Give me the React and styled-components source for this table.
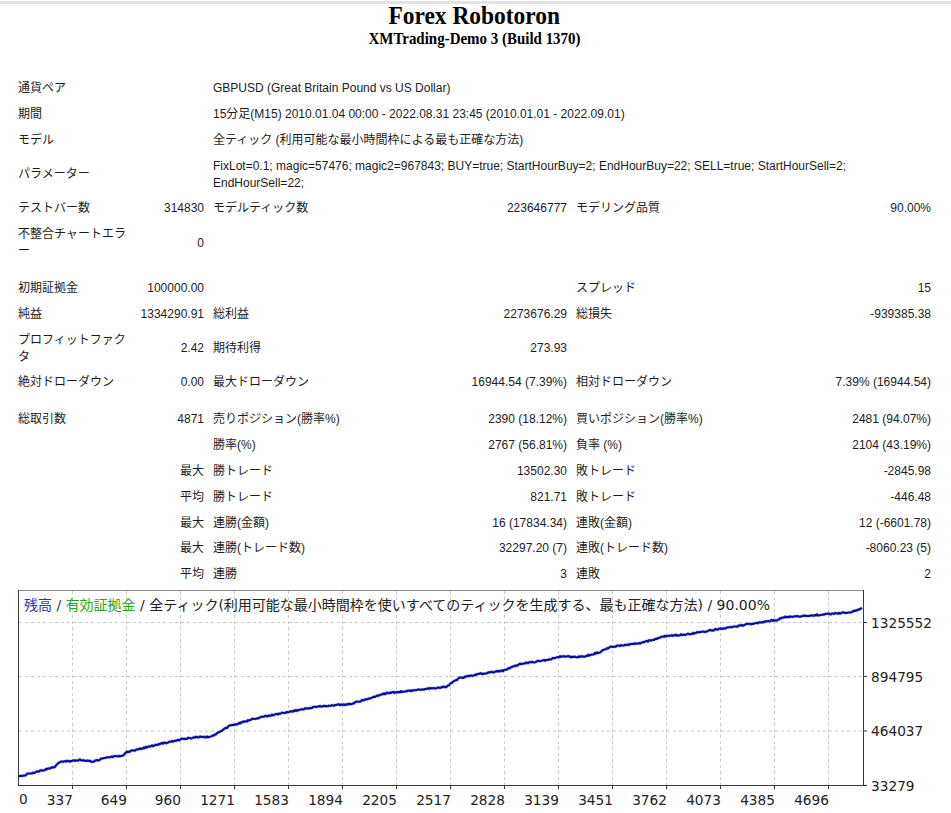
// react imports
import React from 'react';

// 3rd party imports
import styled, { createGlobalStyle } from 'styled-components';

const GlobalStyle = createGlobalStyle`
  html, body {
    margin: 0;
    padding: 0;
    background: #fff;
  }
  body {
    font-family: "Liberation Sans", "Noto Sans CJK JP", sans-serif;
    color: #1c1c1c;
  }
`;

const Page = styled.div`
  width: 951px;
  height: 813px;
  overflow: hidden;
  box-sizing: border-box;
  padding: 0 0 0 18px;
`;

const TopBar = styled.div`
  margin: 1px 0 0 -18px;
  height: 3px;
  background: #e2e2e2;
`;

const Header = styled.div`
  width: 913px;
  display: flex;
  flex-direction: column;
  align-items: center;
`;

const Title = styled.div`
  font-family: "Liberation Serif", serif;
  font-weight: bold;
  font-size: 26px;
  line-height: 24px;
  color: #000;
  transform: scaleX(0.9);
`;

const SubTitle = styled.div`
  font-family: "Liberation Serif", serif;
  font-weight: bold;
  font-size: 17px;
  line-height: 21px;
  color: #000;
  transform: scaleX(0.88);
`;

const Grid = styled.div`
  margin-top: 27px;
  width: 913px;
  display: grid;
  grid-template-columns: 113px 64px 200px 145px 200px 146px;
  column-gap: 9px;
  row-gap: 0.85px;
  align-items: center;
  font-size: 12px;
  line-height: 17px;
`;

const Cell = styled.div`
  padding: 4px 0;
  text-align: ${p => (p.$right ? 'right' : 'left')};
  white-space: ${p => (p.$wrap ? 'normal' : 'nowrap')};
  grid-column: ${p => (p.$span ? `span ${p.$span}` : 'auto')};
`;

const Spacer = styled.div`
  grid-column: 1 / -1;
  height: 10px;
`;

const ChartWrap = styled.div`
  margin-top: 3px;
  width: 930px;
  height: 222px;
`;

const AXIS_FONT = '"DejaVu Sans", "Noto Sans CJK JP", sans-serif';

// points read from the balance curve, page coords
const KEY = [
  [18, 777.7], [55, 768], [60, 763], [80, 761], [93, 762.7], [107, 758], [123, 756.7],
  [127, 753], [160, 745], [183, 740], [200, 737.7], [210, 738], [220, 733], [230, 726.7],
  [240, 724], [253, 720], [277, 715], [287, 713], [317, 707.7], [350, 705], [367, 700],
  [387, 694], [417, 691], [447, 687.7], [453, 683], [460, 679], [480, 675], [503, 671.7],
  [520, 665], [547, 661], [560, 657.7], [583, 657.7], [600, 653], [610, 648], [620, 646.7],
  [640, 644.3], [667, 636.7], [683, 635.7], [700, 633.3], [720, 630], [740, 626.7],
  [750, 625], [777, 621], [783, 618.3], [820, 615.7], [850, 613.3], [862, 609]
];

const buildLine = () => {
  let s = 1234567;
  const rnd = () => {
    s = (s * 16807) % 2147483647;
    return s / 2147483647;
  };
  const pts = [];
  let seg = 0;
  for (let x = KEY[0][0]; x <= KEY[KEY.length - 1][0]; x += 1) {
    while (seg < KEY.length - 2 && x > KEY[seg + 1][0]) seg += 1;
    const [x0, y0] = KEY[seg];
    const [x1, y1] = KEY[seg + 1];
    const t = (x - x0) / (x1 - x0);
    const y = y0 + (y1 - y0) * t + (rnd() - 0.5) * 1.3;
    pts.push(`${(x - 18).toFixed(1)},${(y - 591).toFixed(1)}`);
  }
  return pts.join(' ');
};

const LINE = buildLine();
const XLABELS = ['337', '649', '960', '1271', '1583', '1894', '2205', '2517', '2828', '3139', '3451', '3762', '4073', '4385', '4696'];
const YGRID = [
  { y: 32.5, label: '1325552' },
  { y: 86.5, label: '894795' },
  { y: 141, label: '464037' }
];

const BalanceChart = () => (
  <svg width="930" height="222" viewBox="0 0 930 222">
    <rect x="0.5" y="0.5" width="845" height="195" fill="#fff" />
    {XLABELS.map((_, i) => (
      <line key={`v${i}`} x1={54 * (i + 1) + 0.5} y1="1" x2={54 * (i + 1) + 0.5} y2="195" stroke="#c9c9c9" strokeDasharray="3 3" />
    ))}
    {YGRID.map(g => (
      <line key={`h${g.y}`} x1="1" y1={g.y} x2="845" y2={g.y} stroke="#c9c9c9" strokeDasharray="3 3" />
    ))}
    <polyline points={LINE} fill="none" stroke="#8c8cf0" strokeWidth="3.2" strokeLinejoin="round" opacity="0.55" />
    <polyline points={LINE} fill="none" stroke="#0a0a98" strokeWidth="2" strokeLinejoin="round" />
    <line x1="0.5" y1="0.5" x2="845.5" y2="0.5" stroke="#8a8a8a" />
    <line x1="0.5" y1="0" x2="0.5" y2="196" stroke="#3a3a3a" />
    <line x1="845.5" y1="0" x2="845.5" y2="196" stroke="#3a3a3a" />
    <line x1="0" y1="195.5" x2="846" y2="195.5" stroke="#3a3a3a" />
    {XLABELS.map((_, i) => (
      <line key={`tx${i}`} x1={54 * (i + 1) + 0.5} y1="196" x2={54 * (i + 1) + 0.5} y2="199" stroke="#3a3a3a" />
    ))}
    {[...YGRID.map(g => g.y), 195.5].map(y => (
      <line key={`ty${y}`} x1="846" y1={y} x2="849" y2={y} stroke="#3a3a3a" />
    ))}
    <text x="6" y="20" fontFamily={AXIS_FONT} fontSize="14" fill="#222">
      <tspan fill="#3535a8">残高</tspan>
      <tspan fill="#333"> / </tspan>
      <tspan fill="#26a626">有効証拠金</tspan>
      <tspan fill="#222"> / 全ティック(利用可能な最小時間枠を使いすべてのティックを生成する、最も正確な方法) / 90.00%</tspan>
    </text>
    {YGRID.map(g => (
      <text key={`yl${g.y}`} x="853" y={g.y + 5} fontFamily={AXIS_FONT} fontSize="13.7" fill="#222">{g.label}</text>
    ))}
    <text x="853" y="200.5" fontFamily={AXIS_FONT} fontSize="13.7" fill="#222">33279</text>
    <text x="1" y="214" fontFamily={AXIS_FONT} fontSize="13.7" fill="#222">0</text>
    {XLABELS.map((l, i) => (
      <text key={`xl${l}`} x={54 * (i + 1) + 1} y="215" textAnchor="end" fontFamily={AXIS_FONT} fontSize="13.7" fill="#222">{l}</text>
    ))}
  </svg>
);

const InfoRow = ({ label, children, wrap }) => (
  <>
    <Cell $span={2}>{label}</Cell>
    <Cell $span={4} $wrap={wrap}>{children}</Cell>
  </>
);

const StatRow = ({ cells }) => (
  <>
    {cells.map((c, i) => (
      <Cell key={i} $right={i % 2 === 1} $wrap={i === 0}>
        {c}
      </Cell>
    ))}
  </>
);

const App = () => (
  <Page>
    <GlobalStyle />
    <TopBar />
    <Header>
      <Title>Forex Robotoron</Title>
      <SubTitle>XMTrading-Demo 3 (Build 1370)</SubTitle>
    </Header>
    <Grid>
      <InfoRow label="通貨ペア">GBPUSD (Great Britain Pound vs US Dollar)</InfoRow>
      <InfoRow label="期間">15分足(M15) 2010.01.04 00:00 - 2022.08.31 23:45 (2010.01.01 - 2022.09.01)</InfoRow>
      <InfoRow label="モデル">全ティック (利用可能な最小時間枠による最も正確な方法)</InfoRow>
      <InfoRow label="パラメーター" wrap>
        FixLot=0.1; magic=57476; magic2=967843; BUY=true; StartHourBuy=2; EndHourBuy=22; SELL=true; StartHourSell=2;
        <br />
        EndHourSell=22;
      </InfoRow>
      <StatRow cells={['テストバー数', '314830', 'モデルティック数', '223646777', 'モデリング品質', '90.00%']} />
      <StatRow cells={['不整合チャートエラー', '0', '', '', '', '']} />
      <Spacer />
      <StatRow cells={['初期証拠金', '100000.00', '', '', 'スプレッド', '15']} />
      <StatRow cells={['純益', '1334290.91', '総利益', '2273676.29', '総損失', '-939385.38']} />
      <StatRow cells={['プロフィットファクタ', '2.42', '期待利得', '273.93', '', '']} />
      <StatRow cells={['絶対ドローダウン', '0.00', '最大ドローダウン', '16944.54 (7.39%)', '相対ドローダウン', '7.39% (16944.54)']} />
      <Spacer />
      <StatRow cells={['総取引数', '4871', '売りポジション(勝率%)', '2390 (18.12%)', '買いポジション(勝率%)', '2481 (94.07%)']} />
      <StatRow cells={['', '', '勝率(%)', '2767 (56.81%)', '負率 (%)', '2104 (43.19%)']} />
      <StatRow cells={['', '最大', '勝トレード', '13502.30', '敗トレード', '-2845.98']} />
      <StatRow cells={['', '平均', '勝トレード', '821.71', '敗トレード', '-446.48']} />
      <StatRow cells={['', '最大', '連勝(金額)', '16 (17834.34)', '連敗(金額)', '12 (-6601.78)']} />
      <StatRow cells={['', '最大', '連勝(トレード数)', '32297.20 (7)', '連敗(トレード数)', '-8060.23 (5)']} />
      <StatRow cells={['', '平均', '連勝', '3', '連敗', '2']} />
    </Grid>
    <ChartWrap>
      <BalanceChart />
    </ChartWrap>
  </Page>
);

export default App;
